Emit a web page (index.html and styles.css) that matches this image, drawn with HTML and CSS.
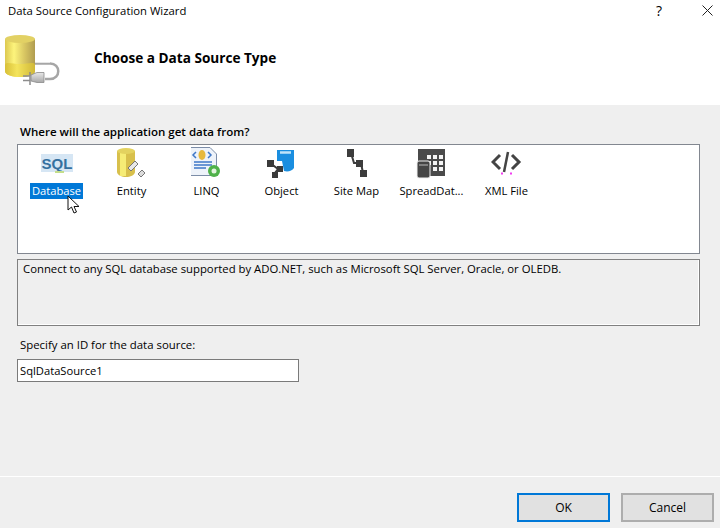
FILE: index.html
```html
<!DOCTYPE html>
<html lang="en">
<head>
    <meta charset="UTF-8">
    <title>Data Source Configuration Wizard</title>
    <link rel="stylesheet" href="styles.css">
</head>
<body>
    <div class="dialog">
        <div class="titlebar">
            <span class="title">Data Source Configuration Wizard</span>
            <span class="help">?</span>
            <svg class="close" width="11" height="11" viewBox="0 0 11 11"><path d="M.5 .5L10.500 10.500M10.500 .5L.5 10.500" stroke="#222" fill="none"/></svg>
        </div>

        <div class="header">
            <svg class="header-icon" width="62" height="56" viewBox="0 0 62 56">
                <defs>
                    <linearGradient id="canGrad" x1="0" x2="1" y1="0" y2="0">
                        <stop offset="0" stop-color="#dcc850"/>
                        <stop offset="0.3" stop-color="#fdf47c"/>
                        <stop offset="0.65" stop-color="#d8c662"/>
                        <stop offset="1" stop-color="#b09c50"/>
                    </linearGradient>
                    <linearGradient id="canBottom" x1="0" x2="1" y1="0" y2="0">
                        <stop offset="0" stop-color="#d8c038"/>
                        <stop offset="0.4" stop-color="#f4e45c"/>
                        <stop offset="1" stop-color="#d0b838"/>
                    </linearGradient>
                    <linearGradient id="plugGrad" x1="0" x2="0" y1="0" y2="1">
                        <stop offset="0" stop-color="#e8e8e8"/>
                        <stop offset="1" stop-color="#a8a8a8"/>
                    </linearGradient>
                </defs>
                <path d="M5 7V39C5 43 13 45 20 45S35 43 35 39V7Z" fill="url(#canGrad)"/>
                <path d="M5 33C5 29 13 32 20 32S35 29 35 33V39C35 43 27 45 20 45S5 43 5 39Z" fill="url(#canBottom)"/>
                <ellipse cx="20" cy="7" rx="15" ry="4" fill="#e2d164"/>
                <path d="M35 31.500H50C61 31.500 61 47 50 47H45" fill="none" stroke="#a6a6a6" stroke-width="2.500"/>
                <path d="M35 30.500H50" stroke="#e6e6e6"/>
                <path d="M31 43L37 40.500H44V50.500H37L31 49Z" fill="url(#plugGrad)" stroke="#8a8a8a" stroke-width="0.800"/>
                <path d="M30 40V53" stroke="#8a8a8a" stroke-width="1.500"/>
                <path d="M23 44H30M23 48.500H30" stroke="#8d8d8d" stroke-width="1.500"/>
            </svg>
            <h1 class="header-title">Choose a Data Source Type</h1>
        </div>

        <div class="body">
            <div class="section-label">Where will the application get data from?</div>

            <div class="type-list">
                <div class="type-item">
                    <svg width="32" height="32" viewBox="0 0 32 32">
                        <rect x="0" y="7" width="32" height="18" fill="#d6e6f4"/>
                        <text x="16" y="22" class="sql-mark">SQL</text>
                        <path d="M14 24h9v2h-9z" fill="#c4de8c"/>
                    </svg>
                    <span class="type-name selected">Database</span>
                </div>
                <div class="type-item">
                    <svg width="32" height="32" viewBox="1 0 32 32">
                        <path d="M2 4V25C2 28 7 30 11 30S20 28 20 25V4Z" fill="#d8c04c"/>
                        <path d="M5 5H11V29H5Z" fill="#f6ec75"/>
                        <ellipse cx="11" cy="4" rx="9" ry="3" fill="#e3d25f"/>
                        <path d="M13 21L20 14L23 17L16 24Z" fill="#e7e7e7" stroke="#777"/>
                        <path d="M23 27L27 23L30 26L26 30Z" fill="#dcdcdc" stroke="#777"/>
                    </svg>
                    <span class="type-name">Entity</span>
                </div>
                <div class="type-item">
                    <svg width="32" height="32" viewBox="2 0 32 32">
                        <path d="M1.500 .5H21L27.500 7V28.500H1.500Z" fill="#eef3fa" stroke="#7c8da8"/>
                        <ellipse cx="13" cy="8" rx="3.500" ry="5" fill="#e7b93d"/>
                        <path d="M7 5L4 8L7 11M19 5L22 8L19 11" fill="none" stroke="#3f78c8" stroke-width="1.500"/>
                        <path d="M5 15H23M5 18H23M5 21H17" stroke="#3f78c8" stroke-width="1.500"/>
                        <circle cx="25" cy="24" r="6" fill="#4fb24a"/>
                        <circle cx="25" cy="24" r="2.500" fill="#e3f5df"/>
                    </svg>
                    <span class="type-name">LINQ</span>
                </div>
                <div class="type-item">
                    <svg width="32" height="32" viewBox="2 0 32 32">
                        <path d="M13 3H30V21C28 24 24 25 20 24L18 14H13Z" fill="#1a8ee0"/>
                        <path d="M16 5.500H27" stroke="#bfe3fa" stroke-width="2.500"/>
                        <path d="M6 16L14 22L10 27" fill="none" stroke="#3a3a3a" stroke-width="2"/>
                        <rect x="3" y="13" width="7" height="7" fill="#3a3a3a"/>
                        <rect x="13" y="19" width="6" height="6" fill="#3a3a3a"/>
                        <rect x="8" y="25" width="6" height="6" fill="#3a3a3a"/>
                    </svg>
                    <span class="type-name">Object</span>
                </div>
                <div class="type-item">
                    <svg width="32" height="32" viewBox="0 0 32 32">
                        <path d="M10 6L13 16H20M20 16L22 26" fill="none" stroke="#3c3c3c" stroke-width="2"/>
                        <rect x="6" y="2" width="7" height="8" fill="#3c3c3c"/>
                        <rect x="15" y="13" width="7" height="7" fill="#3c3c3c"/>
                        <rect x="19" y="23" width="7" height="7" fill="#3c3c3c"/>
                    </svg>
                    <span class="type-name">Site Map</span>
                </div>
                <div class="type-item">
                    <svg width="32" height="32" viewBox="2 0 32 32">
                        <rect x="4" y="2" width="27" height="27" fill="#4a4a4a"/>
                        <path d="M13 8h4v4h-4zM19 8h4v4h-4zM25 8h4v4h-4zM13 14h4v4h-4zM19 14h4v4h-4zM25 14h4v4h-4zM19 20h4v4h-4zM25 20h4v4h-4z" fill="#f4f4f4"/>
                        <rect x="3" y="14" width="13" height="17" rx="2" fill="#454545" stroke="#f0f0f0"/>
                        <path d="M5 18H14" stroke="#bbb"/>
                    </svg>
                    <span class="type-name">SpreadDat...</span>
                </div>
                <div class="type-item">
                    <svg width="32" height="32" viewBox="1 0 32 32">
                        <path d="M10 8L3 15L10 22M22 8L29 15L22 22" fill="none" stroke="#444" stroke-width="3"/>
                        <path d="M18 5L14 25" stroke="#444" stroke-width="2.500"/>
                        <path d="M11 25.500h2v2h-2zM20 25.500h2v2h-2z" fill="#f23cf0"/>
                    </svg>
                    <span class="type-name">XML File</span>
                </div>
                <svg class="cursor" width="14" height="20" viewBox="0 0 14 20">
                    <path d="M1 1V15L4.500 12L7 18L9.500 17L7 11.500H12Z" fill="#fff" stroke="#111"/>
                </svg>
            </div>

            <div class="description">Connect to any SQL database supported by ADO.NET, such as Microsoft SQL Server, Oracle, or OLEDB.</div>

            <label class="id-label" for="sourceId">Specify an ID for the data source:</label>
            <input class="id-input" id="sourceId" type="text" value="SqlDataSource1">
        </div>

        <div class="footer">
            <button class="btn btn-default" type="button">OK</button>
            <button class="btn" type="button">Cancel</button>
        </div>
    </div>
</body>
</html>
```

FILE: styles.css
```css
html, body {
    margin: 0;
    padding: 0;
}
body {
    width: 720px;
    height: 528px;
    overflow: hidden;
    font-family: "Open Sans", "Noto Sans", sans-serif;
    font-size: 12px;
    color: #000;
    background-color: #efefef;
}
.dialog {
    display: flex;
    flex-direction: column;
    height: 528px;
}
.titlebar {
    display: flex;
    align-items: center;
    box-sizing: border-box;
    height: 24px;
    padding: 0 0 3px 8px;
    background-color: white;
}
.title {
    flex: 1;
    font-size: 11.3px;
}
.help {
    margin-right: 40px;
    font-size: 14px;
}
.close {
    margin-right: 7px;
}
.header {
    display: flex;
    align-items: flex-start;
    height: 81px;
    background-color: white;
}
.header-icon {
    margin-top: 8px;
}
.header-title {
    margin: 25px 0 0 32px;
    font-size: 13.6px;
    font-weight: bold;
    line-height: 18px;
}
.body {
    flex: 1;
    padding: 0 17px;
}
.section-label {
    margin: 19px 0 0 3px;
    font-weight: 600;
    font-size: 11.55px;
    line-height: 16px;
}
.type-list {
    position: relative;
    box-sizing: border-box;
    display: flex;
    align-items: flex-start;
    width: 683px;
    height: 110px;
    margin-top: 4px;
    padding: 2px 0 0 1px;
    border: 1px solid #828790;
    background-color: white;
}
.type-item {
    display: flex;
    flex-direction: column;
    align-items: center;
    width: 75px;
}
.type-item svg {
    display: block;
}
.type-name {
    margin-top: 4px;
    padding: 0 2px;
    font-size: 11.2px;
    line-height: 16px;
    white-space: nowrap;
}
.selected {
    background-color: #0078d7;
    color: white;
}
.sql-mark {
    font-family: "Liberation Sans", sans-serif;
    font-size: 15px;
    font-weight: bold;
    text-anchor: middle;
    fill: #35709f;
}
.cursor {
    position: absolute;
    left: 49px;
    top: 50px;
}
.description {
    box-sizing: border-box;
    width: 683px;
    height: 67px;
    margin-top: 5px;
    padding: 1px 5px;
    border: 1px solid #808080;
    box-shadow: inset -1px -1px 0 white;
    font-size: 11.33px;
    line-height: 16px;
}
.id-label {
    display: block;
    margin: 11px 0 0 3px;
    font-size: 11.4px;
    line-height: 16px;
}
.id-input {
    display: block;
    box-sizing: border-box;
    width: 282px;
    height: 23px;
    margin-top: 6px;
    padding: 0 2px;
    border: 1px solid #7a7a7a;
    border-radius: 0;
    outline: none;
    font-family: inherit;
    font-size: 11.2px;
    color: #000;
}
.footer {
    display: flex;
    justify-content: flex-end;
    gap: 11px;
    box-sizing: border-box;
    height: 52px;
    padding: 16px 6px 0 0;
    border-top: 1px solid white;
}
.btn {
    box-sizing: border-box;
    width: 93px;
    height: 29px;
    border: 2px solid #adadad;
    background-color: #e1e1e1;
    font-family: inherit;
    font-size: 12px;
    color: #000;
}
.btn-default {
    border-color: #0078d7;
}
```
